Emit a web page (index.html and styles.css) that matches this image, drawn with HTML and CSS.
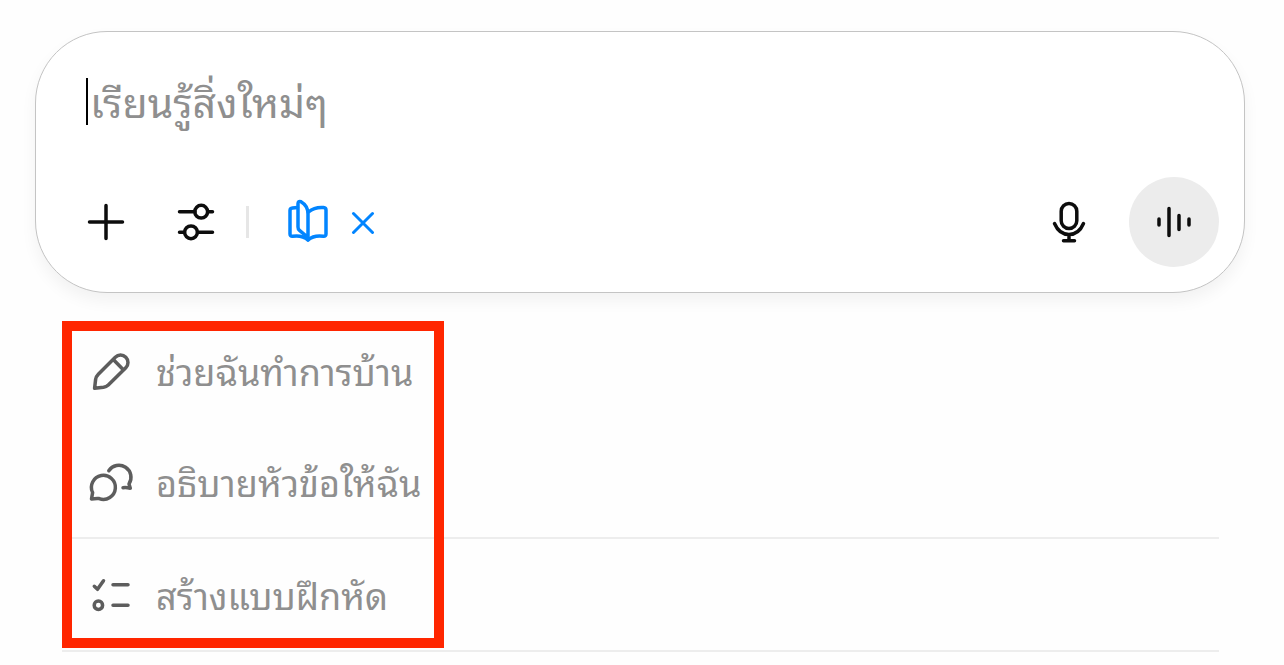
FILE: index.html
```html
<!DOCTYPE html>
<html lang="th">
<head>
    <meta charset="UTF-8">
    <meta name="viewport" content="width=device-width, initial-scale=1.0">
    <title>เรียนรู้สิ่งใหม่ๆ</title>
    <link rel="stylesheet" href="styles.css">
</head>
<body>
    <main>
        <form class="composer">
            <div class="prompt">
                <span class="caret"></span>
                <input class="prompt-input" type="text" placeholder="เรียนรู้สิ่งใหม่ๆ" aria-label="เรียนรู้สิ่งใหม่ๆ">
            </div>

            <div class="toolbar">
                <button type="button" class="tool" aria-label="เพิ่ม">
                    <svg class="icon" width="40" height="40" viewBox="0 0 40 40">
                        <path d="M20 3.5V36.500M3.500 20H36.500"/>
                    </svg>
                </button>
                <button type="button" class="tool" aria-label="เครื่องมือ">
                    <svg class="icon" width="40" height="40" viewBox="0 0 40 40">
                        <path d="M3.500 9.700H19M32 9.700H36.500M3.500 30.300H8.500M21.500 30.300H36.500"/>
                        <circle cx="25.200" cy="9.700" r="6.400"/>
                        <circle cx="15" cy="30.300" r="6.400"/>
                    </svg>
                </button>
                <span class="divider"></span>
                <button type="button" class="tool-study" aria-label="เรียนรู้">
                    <svg class="icon" width="44" height="48" viewBox="0 0 44 48">
                        <path d="M11.500 9.500L6.500 9.900Q4 10.200 4 12.500V36Q4 38.500 6.500 38.300C13 37.300 18 38.500 22 42C26 38.500 31 37.300 37.500 38.300Q40 38.500 40 36V12Q40 9.700 37.500 9.500C31.500 9 27 10.200 22.500 14"/>
                        <path d="M22 42V16C22 10 19 6 15 3.700Q12 2.600 12 5.800V29Q12 31.200 13.500 32.400L22 39.500"/>
                    </svg>
                </button>
                <button type="button" class="tool-close" aria-label="ปิด">
                    <svg class="icon" width="24" height="24" viewBox="0 0 24 24">
                        <path d="M2.500 3.500L21.500 22.500M21.500 3.500L2.500 22.500"/>
                    </svg>
                </button>
                <span class="spacer"></span>
                <button type="button" class="tool" aria-label="ไมโครโฟน">
                    <svg class="icon" width="40" height="48" viewBox="0 0 40 48">
                        <rect x="12.200" y="5.500" width="15.600" height="25" rx="7.800"/>
                        <path d="M5.500 25.500C8.500 32.500 13.500 36.500 20 36.500S31.500 32.500 34.500 25.500M20 37V42.700M14.500 42.700H25.500"/>
                    </svg>
                </button>
                <button type="button" class="tool voice" aria-label="โหมดเสียง">
                    <svg class="icon" width="40" height="40" viewBox="0 0 40 40">
                        <path d="M5 17V23M15 6.500V33.500M25 13.500V27.500M35 17V23"/>
                    </svg>
                </button>
            </div>
        </form>

        <div class="suggestions">
            <ul>
                <li>
                    <button type="button" class="suggestion">
                        <svg class="icon" width="48" height="48" viewBox="0 0 48 48">
                            <path d="M11.300 27.200L28.300 10.200A7.400 7.400 0 0 1 38.800 20.700L21.300 38Q19.300 39.900 16.500 40.300L7.600 41.300L8.600 32.500Q9 29.500 11.300 27.200ZM26.300 12.600L36.300 22.800"/>
                        </svg>
                        <span>ช่วยฉันทำการบ้าน</span>
                    </button>
                </li>
                <li>
                    <button type="button" class="suggestion">
                        <svg class="icon" width="48" height="48" viewBox="0 0 48 48">
                            <path d="M4.500 41L5.600 34.600A12 12 0 1 1 12.200 40.600Q9 40.300 4.500 41Z"/>
                            <path d="M21.800 12.700A12 12 0 0 1 42 26L43.300 30.200Q39 29.200 36 29.700"/>
                        </svg>
                        <span>อธิบายหัวข้อให้ฉัน</span>
                    </button>
                </li>
                <li>
                    <button type="button" class="suggestion">
                        <svg class="icon" width="48" height="48" viewBox="0 0 48 48">
                            <path d="M7.300 15.300L10.500 18.300L16.500 9.800M26 13.700H41M26 34.200H41"/>
                            <circle cx="11.400" cy="34.200" r="4.200"/>
                        </svg>
                        <span>สร้างแบบฝึกหัด</span>
                    </button>
                </li>
            </ul>
            <div class="highlight"></div>
        </div>
    </main>
</body>
</html>
```

FILE: styles.css
```css
body {
    background-color: #fefefe;
    color: #0d0d0d;
    font-family: "Noto Sans Thai Looped", Loma, Garuda, Waree, "Liberation Sans", sans-serif;
    margin: 0;
}

button {
    background: none;
    border: none;
    color: inherit;
    font: inherit;
    padding: 0;
    cursor: pointer;
}

.icon {
    display: block;
    flex: none;
    fill: none;
    stroke: currentColor;
    stroke-width: 3.5px;
    stroke-linecap: round;
    stroke-linejoin: round;
}

/* Prompt box */
.composer {
    box-sizing: border-box;
    margin: 31px 39px 0 35px;
    padding: 37px 25px 25px;
    background-color: #fff;
    border: 1px solid #c4c4c4;
    border-radius: 72px;
    box-shadow: 0 8px 16px rgba(0, 0, 0, 0.05);
}

.prompt {
    display: flex;
    align-items: center;
    height: 64px;
    margin-bottom: 44px;
    padding: 0 25px;
}

.caret {
    width: 2px;
    height: 47px;
    background-color: #000;
}

.prompt-input {
    box-sizing: border-box;
    flex: 1;
    min-width: 0;
    height: 64px;
    padding: 0 2px 4px;
    border: none;
    outline: none;
    background: none;
    color: #0d0d0d;
    font-family: inherit;
    font-size: 41px;
}

.prompt-input::placeholder {
    color: #8f8f8f;
    opacity: 1;
}

.toolbar {
    display: flex;
    align-items: center;
}

.tool {
    display: flex;
    align-items: center;
    justify-content: center;
    width: 90px;
    height: 90px;
    border-radius: 50%;
}

.divider {
    width: 3px;
    height: 32px;
    margin: 0 37px 0 5px;
    background-color: #e6e6e6;
}

.tool-study,
.tool-close {
    color: #0285ff;
}

.tool-close {
    margin-left: 21px;
}

.tool-close .icon {
    stroke-width: 3px;
}

.spacer {
    flex: 1;
}

.voice {
    margin-left: 15px;
    background-color: #ececec;
}

/* Suggestions */
.suggestions {
    position: relative;
    margin: 22px 65px 0 62px;
}

.suggestions ul {
    list-style: none;
    margin: 0;
    padding: 0;
}

.suggestions li + li {
    border-bottom: 2px solid #ededed;
}

.suggestion {
    display: flex;
    align-items: center;
    gap: 21px;
    width: 100%;
    height: 111px;
    padding: 0 25px;
    color: #8f8f8f;
    font-size: 36px;
    line-height: 60px;
    text-align: left;
}

.suggestion span {
    padding-bottom: 2px;
}

.suggestion .icon {
    color: #5d5d5d;
}

/* Red frame drawn over the list */
.highlight {
    position: absolute;
    top: 6px;
    left: 0;
    box-sizing: border-box;
    width: 382px;
    height: 327px;
    border: 10px solid #ff2600;
    pointer-events: none;
}
```
